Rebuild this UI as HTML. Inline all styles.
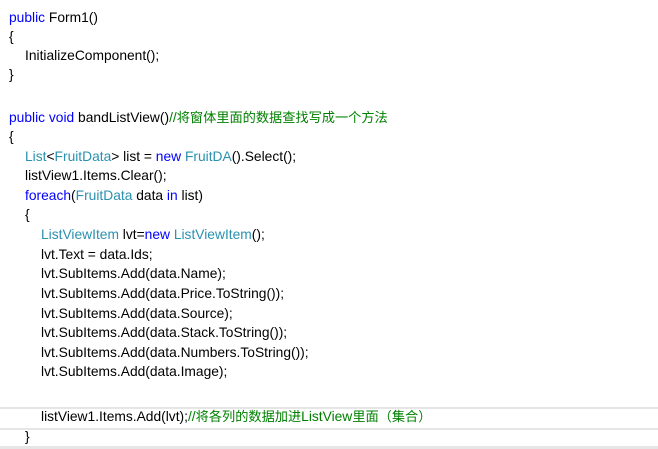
<!DOCTYPE html>
<html><head><meta charset="utf-8"><style>
body{margin:0;width:658px;height:449px;background:#fff;overflow:hidden;position:relative;font-family:"Liberation Sans","Noto Sans CJK SC",sans-serif;font-size:13.8px;color:#000}
.l{position:absolute;left:9px;height:19px;line-height:19px;white-space:pre}
.k{color:#0000ff}.t{color:#2b91af}.c{color:#008000}
.z{font-size:13.2px}
.hl{position:absolute;left:0;width:658px;top:407px;height:19px;border-top:2px solid #e6e6e6;border-bottom:2px solid #e6e6e6}
.bot{position:absolute;left:0;width:658px;top:446px;height:3px;background:#e6e6e6}
</style></head><body>
<div class="hl"></div><div class="bot"></div>
<div class="l" style="top:8px"><span class="k">public</span> Form1()</div>
<div class="l" style="top:27px">{</div>
<div class="l" style="top:46px;left:25px">InitializeComponent();</div>
<div class="l" style="top:65px">}</div>
<div class="l" style="top:108px"><span class="k">public</span> <span class="k">void</span> bandListView()<span class="c">//<span class="z">将窗体里面的数据查找写成一个方法</span></span></div>
<div class="l" style="top:127px">{</div>
<div class="l" style="top:147px;left:25px"><span class="t">List</span>&lt;<span class="t">FruitData</span>&gt; list = <span class="k">new</span> <span class="t">FruitDA</span>().Select();</div>
<div class="l" style="top:166px;left:25px">listView1.Items.Clear();</div>
<div class="l" style="top:186px;left:25px"><span class="k">foreach</span>(<span class="t">FruitData</span> data <span class="k">in</span> list)</div>
<div class="l" style="top:205px;left:25px">{</div>
<div class="l" style="top:225px;left:41px"><span class="t">ListViewItem</span> lvt=<span class="k">new</span> <span class="t">ListViewItem</span>();</div>
<div class="l" style="top:245px;left:41px">lvt.Text = data.Ids;</div>
<div class="l" style="top:264px;left:41px">lvt.SubItems.Add(data.Name);</div>
<div class="l" style="top:284px;left:41px">lvt.SubItems.Add(data.Price.ToString());</div>
<div class="l" style="top:304px;left:41px">lvt.SubItems.Add(data.Source);</div>
<div class="l" style="top:323px;left:41px">lvt.SubItems.Add(data.Stack.ToString());</div>
<div class="l" style="top:343px;left:41px">lvt.SubItems.Add(data.Numbers.ToString());</div>
<div class="l" style="top:362px;left:41px">lvt.SubItems.Add(data.Image);</div>
<div class="l" style="top:407px;left:41px">listView1.Items.Add(lvt);<span class="c">//<span class="z">将各列的数据加进</span>ListView<span class="z">里面（集合）</span></span></div>
<div class="l" style="top:427px;left:25px">}</div>
</body></html>
